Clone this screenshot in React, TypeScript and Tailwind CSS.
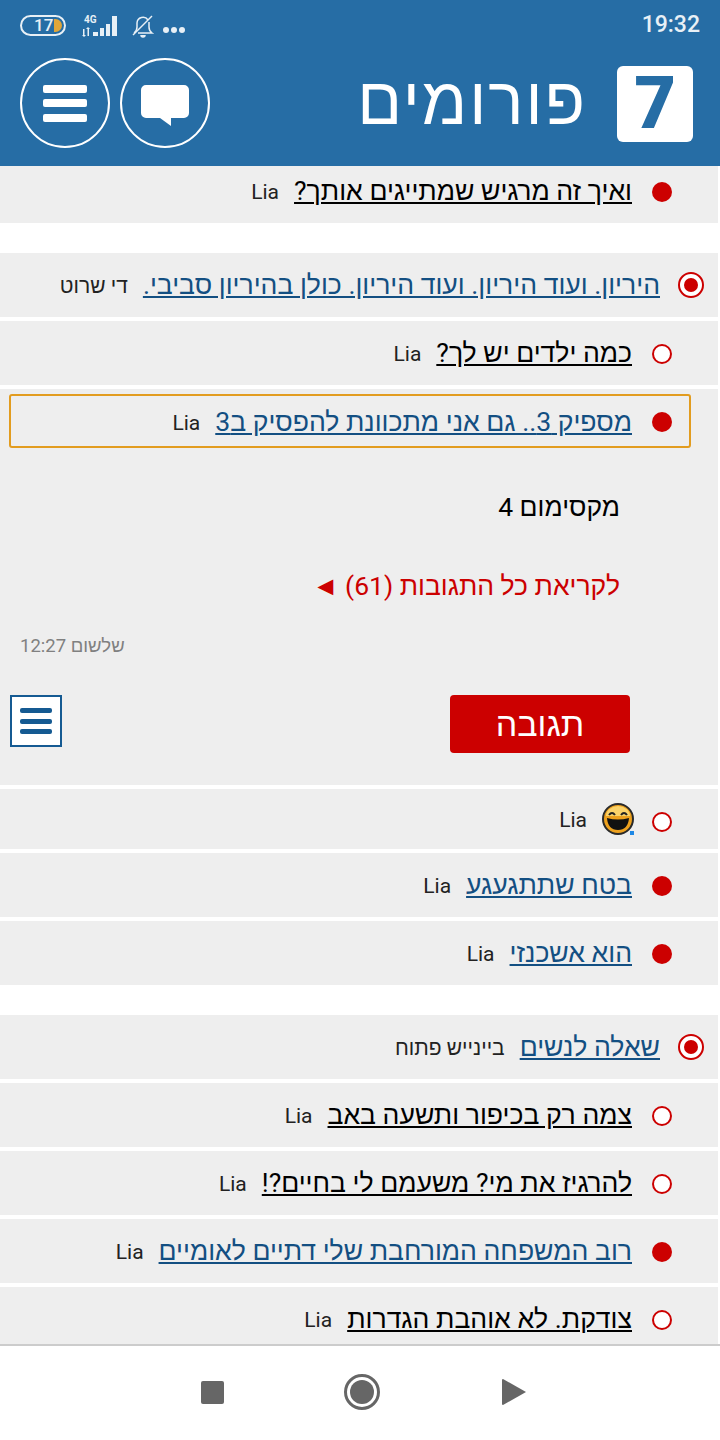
import React from 'react';

type Mark = 'full' | 'empty';

type Topic = {
  title?: string;
  author: string;
  mark: Mark;
  unread?: boolean;
  emoji?: boolean;
};

function Dot({ mark }: { mark: Mark }) {
  if (mark === 'full') return <span className="block w-5 h-5 rounded-full bg-[#cc0000]" />;
  return <span className="block w-5 h-5 rounded-full bg-white border-2 border-[#cc0000]" />;
}

function Laugh() {
  return (
    <svg width="32" height="32" viewBox="0 0 32 32">
      <circle cx="16" cy="16" r="15" fill="#eda11e" stroke="#2a2a2a" strokeWidth="2" />
      <path d="M4 13a12 10 0 0 1 24 0z" fill="#fbd36a" />
      <path d="M7 12q3-4 6 0M19 12q3-4 6 0" fill="none" stroke="#222" strokeWidth="2" />
      <path d="M5 15q11 3 22 0q-1 12-11 12t-11-12z" fill="#111" />
      <rect x="28" y="28" width="4" height="4" fill="#1e88e5" />
    </svg>
  );
}

function TopicRow({ title, author, mark, unread, emoji }: Topic) {
  return (
    <div dir="rtl" className={`flex ${emoji ? 'h-[60px]' : 'h-16'} shrink-0`}>
      <div className={`w-20 shrink-0 bg-[#eeeeee] border-r-2 border-white flex items-center justify-end pl-3 ${emoji ? 'pt-[5px]' : 'pt-[1px]'}`}>
        <Dot mark={mark} />
      </div>
      <div className={`flex-1 bg-[#eeeeee] flex items-center gap-[15px] whitespace-nowrap ${emoji ? 'pr-[6px]' : 'pr-2'}`}>
        {title && <a className={`text-[26.6px] underline ${unread ? 'text-[#134f82]' : 'text-black'}`}>{title}</a>}
        {emoji && <Laugh />}
        <span className="text-[21px] text-[#222] mt-1">{author}</span>
      </div>
    </div>
  );
}

function RootRow({ title, author }: { title: string; author: string }) {
  return (
    <div dir="rtl" className="flex h-16 shrink-0">
      <div className="w-[52px] shrink-0 bg-[#eeeeee] border-r-2 border-white flex items-center justify-end pl-[10px]">
        <span className="w-[26px] h-[26px] rounded-full border-2 border-[#cc0000] bg-white flex items-center justify-center">
          <span className="w-[14px] h-[14px] rounded-full bg-[#cc0000]" />
        </span>
      </div>
      <div className="flex-1 bg-[#eeeeee] flex items-center pr-2 gap-[15px] whitespace-nowrap">
        <a className="text-[26.6px] underline text-[#134f82]">{title}</a>
        <span className="text-[21px] text-[#222] mt-1">{author}</span>
      </div>
    </div>
  );
}

function ExpandedPost() {
  return (
    <div dir="rtl" className="relative flex h-[396px] shrink-0">
      <div className="w-20 shrink-0 bg-[#eeeeee] border-r-2 border-white flex justify-end pl-3 pt-[23px]">
        <Dot mark="full" />
      </div>
      <div className="flex-1 bg-[#eeeeee] flex flex-col pr-5 pl-[10px]">
        <div className="flex items-center h-[66px] -mr-3 gap-[15px] whitespace-nowrap">
          <a className="text-[26.6px] underline text-[#134f82]">מספיק 3.. גם אני מתכוונת להפסיק ב3</a>
          <span className="text-[21px] text-[#222] mt-1">Lia</span>
        </div>
        <p className="mt-[36px] text-[26.5px] leading-8 text-black">מקסימום 4</p>
        <p className="mt-[47px] text-[26.5px] leading-8 text-[#cc0000]">
          לקריאת כל התגובות (61) <span style={{ fontFamily: '"Liberation Sans", sans-serif' }}>◄</span>
        </p>
        <p className="mt-[32px] pl-[10px] text-[18.5px] leading-6 text-[#808080] text-left">שלשום 12:27</p>
        <div className="mt-[37px] flex justify-between items-start">
          <button className="w-[180px] h-[58px] -mr-[10px] rounded bg-[#cc0000] text-white text-[34px]">תגובה</button>
          <button className="w-[52px] h-[52px] bg-white border-2 border-[#155a92] flex flex-col items-center justify-center gap-[5.5px]">
            <span className="w-8 h-[5px] rounded-[2px] bg-[#155a92]" />
            <span className="w-8 h-[5px] rounded-[2px] bg-[#155a92]" />
            <span className="w-8 h-[5px] rounded-[2px] bg-[#155a92]" />
          </button>
        </div>
      </div>
      {/* highlight round the open topic */}
      <div className="absolute left-[9px] right-[29px] top-[5px] h-[54px] border-2 border-[#e29c1f] rounded-[3px] pointer-events-none" />
    </div>
  );
}

function StatusBar() {
  return (
    <div className="h-[50px] flex items-center justify-between pl-5 pr-5 pt-[1px]">
      <div className="flex items-center">
        <div className="relative w-[46px] h-[21px] rounded-full border-2 border-[#e8f0f6] flex items-center pl-[12px]">
          <span className="text-[17px] font-medium leading-none text-[#e8f0f6]">17</span>
          <span className="absolute right-[2px] top-[2px] w-[8px] h-[13px] rounded-r-full bg-[#e0a63a]" />
        </div>
        <svg className="ml-[16px]" width="38" height="22" viewBox="0 0 38 22" fill="#e8f0f6">
          <text x="2" y="8" fontSize="10" fontWeight="700" fontFamily="Roboto, sans-serif">4G</text>
          <path d="M1 14h1.500v6H4l-2 2-2-2h1zM6 12l2 2H7v7H5.500v-7H4z" />
          <rect x="11" y="17" width="5" height="4" />
          <rect x="18" y="13" width="4" height="8" />
          <rect x="24" y="9" width="4" height="12" />
          <rect x="30" y="1" width="5" height="20" />
        </svg>
        <svg className="ml-[12px]" width="22" height="24" viewBox="0 0 22 24" fill="none" stroke="#e8f0f6" strokeWidth="1.5">
          <path d="M2 19q3-2 3-6V9a6 6 0 0 1 11-3M17 8v5q0 4 3 6H6" />
          <path d="M1 21 20 2" />
          <path d="M9 21a2 2 0 0 0 4 0" fill="#e8f0f6" />
        </svg>
        <div className="ml-[9px] mt-[9px] flex gap-[2px]">
          <span className="w-[6px] h-[6px] rounded-full bg-[#e8f0f6]" />
          <span className="w-[6px] h-[6px] rounded-full bg-[#e8f0f6]" />
          <span className="w-[6px] h-[6px] rounded-full bg-[#e8f0f6]" />
        </div>
      </div>
      <span className="text-[23px] font-medium text-[#e8f0f6]">19:32</span>
    </div>
  );
}

function Header() {
  return (
    <header className="h-[166px] shrink-0 bg-[#266da5]">
      <StatusBar />
      <div className="flex items-center justify-between pl-5 pr-[27px] pt-2">
        <div className="flex gap-[10px]">
          <button className="w-[90px] h-[90px] rounded-full border-2 border-white flex flex-col items-center justify-center gap-[6.5px]">
            <span className="w-[44px] h-2 rounded-[2px] bg-white" />
            <span className="w-[44px] h-2 rounded-[2px] bg-white" />
            <span className="w-[44px] h-2 rounded-[2px] bg-white" />
          </button>
          <button className="w-[90px] h-[90px] rounded-full border-2 border-white flex items-center justify-center">
            <svg className="mt-[6px]" width="48" height="42" viewBox="0 0 48 42" fill="#fff">
              <path d="M5 0h38a5 5 0 0 1 5 5v23a5 5 0 0 1-5 5H30v8L19 33H5a5 5 0 0 1-5-5V5a5 5 0 0 1 5-5z" />
            </svg>
          </button>
        </div>
        <div dir="rtl" className="flex items-center gap-[30px] pt-[2px]">
          <div className="w-[76px] h-[76px] rounded-md bg-white flex items-center justify-center">
            <span className="text-[72px] leading-none font-black text-[#266da5]">7</span>
          </div>
          <h1 className="text-[66px] leading-none text-white -mt-[6px] font-normal tracking-[2px]" style={{ fontFamily: '"Liberation Sans", sans-serif' }}>פורומים</h1>
        </div>
      </div>
    </header>
  );
}

function BottomNav() {
  return (
    <nav className="h-[96px] shrink-0 bg-white border-t-2 border-[#cccccc] flex items-center pl-[201px] pb-[2px]">
      <span className="block w-[23px] h-[23px] rounded-[2px] bg-[#666666]" />
      <span className="ml-[120px] w-9 h-9 rounded-full border-[3px] border-[#666666] flex items-center justify-center">
        <span className="w-6 h-6 rounded-full bg-[#666666]" />
      </span>
      <svg className="ml-[122px]" width="24" height="26" viewBox="0 0 24 26" fill="#666666">
        <path d="M1 0 24 13 1 26a1 1 0 0 1-1-1V1a1 1 0 0 1 1-1z" />
      </svg>
    </nav>
  );
}

export default function App() {
  return (
    <div className="w-[720px] h-[1440px] flex flex-col bg-white overflow-hidden" style={{ fontFamily: 'Roboto, "Liberation Sans", sans-serif' }}>
      <Header />
      <main className="flex-1 overflow-hidden flex flex-col">
        {/* list is scrolled a little, the first row is cut off by the header */}
        <div className="-mt-[7px]">
          <TopicRow title="ואיך זה מרגיש שמתייגים אותך?" author="Lia" mark="full" />
        </div>
        <div className="h-[30px] shrink-0" />
        <div className="flex flex-col gap-1">
          <RootRow title="היריון. ועוד היריון. ועוד היריון. כולן בהיריון סביבי." author="די שרוט" />
          <TopicRow title="כמה ילדים יש לך?" author="Lia" mark="empty" />
          <ExpandedPost />
          <TopicRow author="Lia" mark="empty" emoji />
          <TopicRow title="בטח שתתגעגע" author="Lia" mark="full" unread />
          <TopicRow title="הוא אשכנזי" author="Lia" mark="full" unread />
        </div>
        <div className="h-[30px] shrink-0" />
        <div className="flex flex-col gap-1">
          <RootRow title="שאלה לנשים" author="ביינייש פתוח" />
          <TopicRow title="צמה רק בכיפור ותשעה באב" author="Lia" mark="empty" />
          <TopicRow title="להרגיז את מי? משעמם לי בחיים?!" author="Lia" mark="empty" />
          <TopicRow title="רוב המשפחה המורחבת שלי דתיים לאומיים" author="Lia" mark="full" unread />
          <TopicRow title="צודקת. לא אוהבת הגדרות" author="Lia" mark="empty" />
        </div>
      </main>
      <BottomNav />
    </div>
  );
}
